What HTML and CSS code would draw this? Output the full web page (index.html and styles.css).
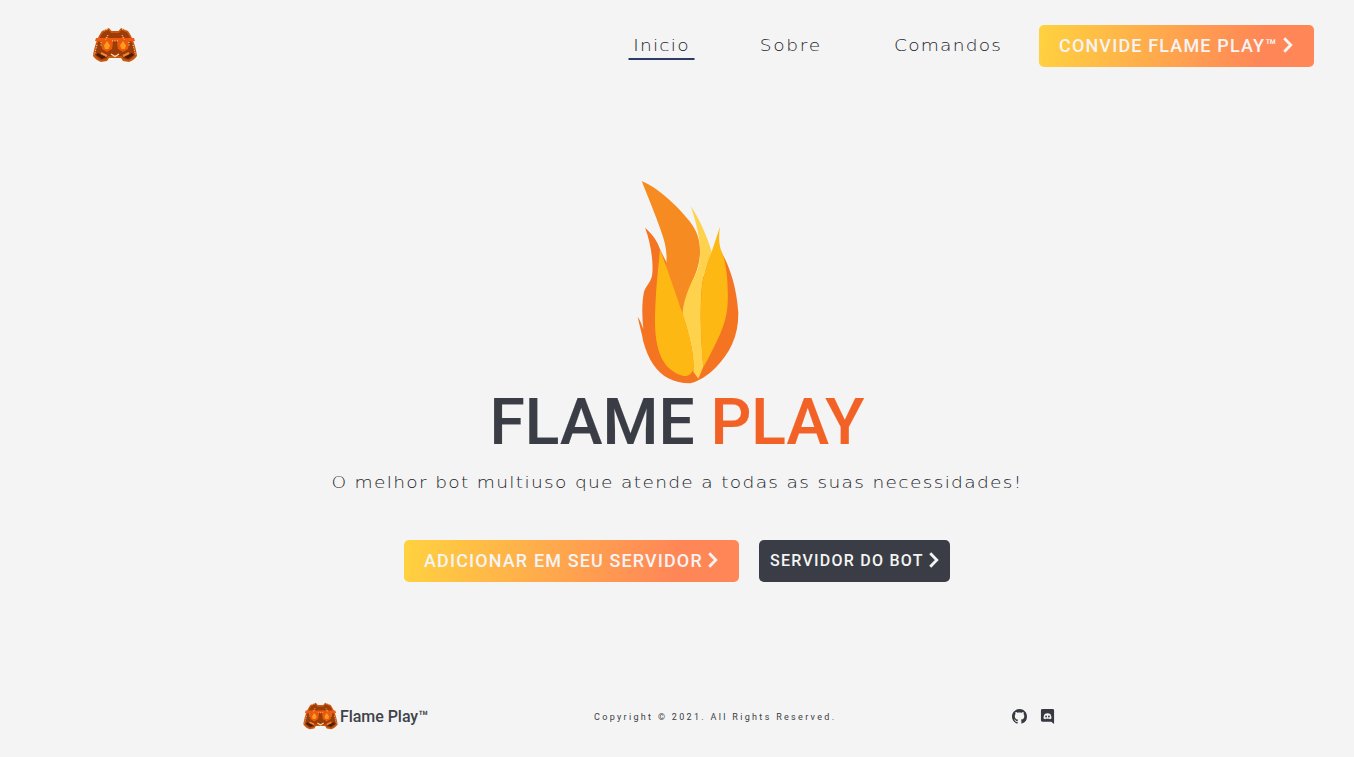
FILE: index.html
```html
<!DOCTYPE html>
<html lang="pt">
<head>
<meta charset="utf-8">
<title>Flame Play</title>
<link rel="stylesheet" href="styles.css">
</head>
<body>
<svg class="defs" width="0" height="0" aria-hidden="true">
  <symbol id="bot" viewBox="0 0 44 36">
    <path d="M9 4 16 1 18.500 4H25.500L28 1 35 4C39 9 43 20 44 29 42 32 39 34 36 35L30 34 28 31H16L14 34 8 35C5 34 2 32 0 29 1 20 5 9 9 4Z" fill="#c9580f"/>
    <path d="M10 5.500 15.500 3 18 6H26L28.500 3 34 5.500C37.500 10 41 20 42 28 40 30 38 32 36 33L31 32 29 29H15L13 32 8 33C6 32 4 30 2 28 3 20 6.500 10 10 5.500Z" fill="#9c3c08"/>
    <path d="M5 26 13 30 9 32 3 28ZM39 26 31 30 35 32 41 28Z" fill="#4c1c05"/>
    <path d="M3 11 41 11 42 14 32 15 22 14 12 15 2 14Z" fill="#ef5a10"/>
    <path d="M14 9 20 16 19 22 14 25 9 22 8 15Z" fill="#ea5a0c"/>
    <path d="M30 9 36 15 35 22 30 25 25 22 24 16Z" fill="#ea5a0c"/>
    <path d="M14 14 17 18.500 15.500 22 12 22 11 18.500Z" fill="#ff9d1e"/>
    <path d="M30 14 33 18.500 32 22 28.500 22 27 18.500Z" fill="#ff9d1e"/>
    <path d="M18 27 22 29.500 26 27" fill="none" stroke="#ffe3b0" stroke-width="1.300"/>
    <path d="M8 26 14 29M36 26 30 29" stroke="#f0813a" stroke-width="2" fill="none"/>
    <path d="M15 8 12.500 13M29 8 31.500 13M19 14 25 14M8 15 8 20M36 15 36 20M11 3 15 2M29 2 33 3M4 18 1.500 28M40 18 42.500 28" stroke="#ffe0b8" stroke-width="1" stroke-dasharray="1 1.500" fill="none"/>
  </symbol>
  <symbol id="chev" viewBox="0 0 10 16">
    <path d="M2.200 2.200 7.800 8 2.200 13.800" fill="none" stroke="currentColor" stroke-width="2.800" stroke-linecap="square"/>
  </symbol>
</svg>

<div class="page">
  <header class="top">
    <a class="top-logo" href="#"><svg class="logo-lg"><use href="#bot"/></svg></a>
    <nav class="nav">
      <a class="nav-link is-active" href="#">Inicio</a>
      <a class="nav-link nav-sobre" href="#">Sobre</a>
      <a class="nav-link nav-cmd" href="#">Comandos</a>
      <a class="btn btn-warm btn-invite" href="#">CONVIDE FLAME PLAY™<svg class="chev"><use href="#chev"/></svg></a>
    </nav>
  </header>

  <main class="hero">
    <svg class="flame" viewBox="0 0 390 660" aria-label="Flame Play">
      <path fill="#F47421" d="M75 173C100 195 113 215 120 238L200 400L300 240C325 280 350 345 355 430C355 500 330 550 285 595C265 615 235 635 210 640C185 640 165 635 145 625C110 605 85 570 70 515C66 490 58 465 53 440C60 450 66 465 70 478C66 440 65 400 72 365C80 345 95 335 97 310C100 275 92 215 75 173Z"/>
      <path fill="#F68B21" d="M65 33C115 55 165 100 210 155C232 185 241 210 240 250C238 290 225 315 213 345C203 370 195 395 187 425L138 290C143 250 137 220 122 180C105 130 85 85 65 33Z"/>
      <path fill="#FFD24D" d="M212 107C240 150 260 195 275 245C258 280 248 320 244 370C240 440 243 500 250 590L235 626L220 605C222 560 215 520 187 430C192 385 210 345 228 310C240 285 243 255 238 210C233 175 223 140 212 107Z"/>
      <path fill="#FDB813" d="M120 238C143 300 165 365 187 428C205 480 218 530 222 590C218 610 205 620 190 618C165 612 140 595 125 565C105 520 103 470 106 410C108 350 115 295 120 238Z"/>
      <path fill="#FDB813" d="M300 170C296 195 296 225 305 245C320 280 325 340 323 400C320 450 305 485 285 525C270 555 255 585 238 612L250 590C243 520 240 440 244 375C247 325 258 280 275 245C283 220 292 195 300 170Z"/>
    </svg>
    <h1 class="title">FLAME <span class="title-accent">PLAY</span></h1>
    <p class="tagline">O melhor bot multiuso que atende a todas as suas necessidades!</p>
    <div class="actions">
      <a class="btn btn-warm btn-add" href="#">ADICIONAR EM SEU SERVIDOR<svg class="chev"><use href="#chev"/></svg></a>
      <a class="btn btn-dark" href="#">SERVIDOR DO BOT<svg class="chev"><use href="#chev"/></svg></a>
    </div>
  </main>

  <footer class="foot">
    <div class="brand">
      <svg class="logo-sm"><use href="#bot"/></svg>
      <span class="brand-name">Flame Play™</span>
    </div>
    <p class="copy">Copyright © 2021. All Rights Reserved.</p>
    <div class="socials">
      <svg class="social" viewBox="0 0 16 16" aria-label="GitHub"><path fill="#363940" d="M8 0C3.580 0 0 3.580 0 8c0 3.540 2.290 6.530 5.470 7.590.4.070.55-.17.55-.38 0-.19-.01-.82-.01-1.490-2.010.37-2.530-.49-2.690-.94-.09-.23-.48-.94-.82-1.130-.28-.15-.68-.52-.01-.53.63-.01 1.080.58 1.230.82.72 1.210 1.870.87 2.330.66.070-.52.280-.87.510-1.070-1.780-.2-3.640-.89-3.640-3.950 0-.87.31-1.590.82-2.150-.08-.2-.36-1.020.08-2.120 0 0 .67-.21 2.200.82.64-.18 1.320-.27 2-.27.68 0 1.360.09 2 .27 1.530-1.040 2.200-.82 2.200-.82.44 1.100.16 1.920.08 2.120.51.56.82 1.270.82 2.150 0 3.070-1.870 3.750-3.650 3.950.29.25.54.73.54 1.480 0 1.070-.01 1.930-.01 2.200 0 .21.15.46.55.38A8.013 8.013 0 0016 8c0-4.420-3.580-8-8-8z"/></svg>
      <svg class="social" viewBox="0 0 16 16" aria-label="Discord"><path fill="#363940" d="M2.500 0h11A1.500 1.500 0 0 1 15 1.500V16l-3-2.500H2.500A1.500 1.500 0 0 1 1 12V1.500A1.500 1.500 0 0 1 2.500 0Z"/><path fill="#f4f4f4" d="M5 5.200C7 4.200 9 4.200 11 5.200 11.900 6.800 12.300 8.300 12.300 9.800 11.600 10.400 10.900 10.700 10.200 10.800L9.700 10.100C8.500 10.500 7.500 10.500 6.300 10.100L5.800 10.800C5.100 10.700 4.400 10.400 3.700 9.800 3.700 8.300 4.100 6.800 5 5.200Z"/><circle cx="6.500" cy="8" r="1" fill="#363940"/><circle cx="9.500" cy="8" r="1" fill="#363940"/></svg>
    </div>
  </footer>
</div>
</body>
</html>
```

FILE: styles.css
```css
* { box-sizing: border-box; }

html, body { margin: 0; padding: 0; }

body {
  background: #f4f4f4;
  color: #3a3d45;
  font-family: "Roboto", "Liberation Sans", sans-serif;
}

a { text-decoration: none; color: inherit; }

.defs { display: block; height: 0; }

.page {
  height: 757px;
  display: flex;
  flex-direction: column;
  overflow: hidden;
}

/* Header */
.top {
  display: flex;
  justify-content: space-between;
  padding: 25px 40px 0 93px;
  height: 67px;
}

.top-logo { display: block; padding-top: 2px; }

.logo-lg { display: block; width: 44px; height: 36px; }

.nav { display: flex; align-items: flex-start; }

/* The wide squared display face is not installed: a horizontally stretched
   DejaVu Sans gives the same proportions. */
.nav-link {
  font-family: "DejaVu Sans", sans-serif;
  font-weight: 200;
  font-size: 15.500px;
  letter-spacing: 1px;
  line-height: 20px;
  color: #23262c;
  padding: 11px 4px 3px;
  height: 35px;
  border-bottom: 2px solid transparent;
  transform: scaleX(1.2);
}

.nav-link.is-active { border-bottom-color: #2d3a63; }

.nav-sobre { margin-left: 72px; letter-spacing: 1.400px; }
.nav-cmd { margin-left: 78px; }

.btn {
  display: inline-flex;
  align-items: center;
  height: 42px;
  padding-bottom: 2px;
  border-radius: 5px;
  color: #f4f4f4;
  font-weight: 500;
  white-space: nowrap;
}

.btn-warm {
  background: linear-gradient(100deg, #ffd23f 0%, #ff8757 80%, #ff8757 100%);
}

.btn-invite {
  margin-left: 42px;
  width: 275px;
  padding-left: 20px;
  font-size: 18px;
  letter-spacing: 1.150px;
}

.chev { display: block; width: 10px; height: 16px; margin-left: 5px; flex: none; }

/* Hero */
.hero {
  display: flex;
  flex-direction: column;
  align-items: center;
  padding-top: 84px;
}

.flame { display: block; width: 130px; height: 220px; margin-top: 19px; margin-bottom: -5px; transform: translateX(8px); }

.title {
  margin: 0;
  font-size: 64px;
  line-height: 76px;
  font-weight: 500;
  color: #3a3d45;
  -webkit-text-stroke: 0.2px currentColor;
}

.title-accent { color: #f26226; }

.tagline {
  margin: 12px 0 0;
  font-family: "DejaVu Sans", sans-serif;
  font-weight: 200;
  font-size: 15.500px;
  line-height: 20px;
  letter-spacing: 1.090px;
  color: #23262c;
  transform: scaleX(1.2);
}

.actions {
  display: flex;
  gap: 20px;
  margin-top: 47px;
}

.btn-add {
  width: 335px;
  padding-left: 20px;
  font-size: 18px;
  letter-spacing: 1.120px;
}

.btn-dark {
  width: 191px;
  padding-left: 11px;
  background: #3a3d45;
  font-size: 16px;
  letter-spacing: 1.250px;
}

/* Footer */
.foot {
  margin-top: auto;
  height: 82px;
  padding-left: 303px;
  display: grid;
  grid-template-columns: 291px 418px auto;
  align-items: center;
  justify-content: start;
}

.brand { display: flex; align-items: center; gap: 2px; }

.logo-sm { display: block; width: 35px; height: 28px; }

.brand-name { font-size: 16px; font-weight: 500; color: #3f424a; letter-spacing: -0.050px; }

.copy {
  margin: 2px 0 0;
  font-size: 9px;
  letter-spacing: 2.320px;
  color: #3a3d45;
}

.socials { display: flex; gap: 13px; }

.social { display: block; width: 15px; height: 15px; }
```
